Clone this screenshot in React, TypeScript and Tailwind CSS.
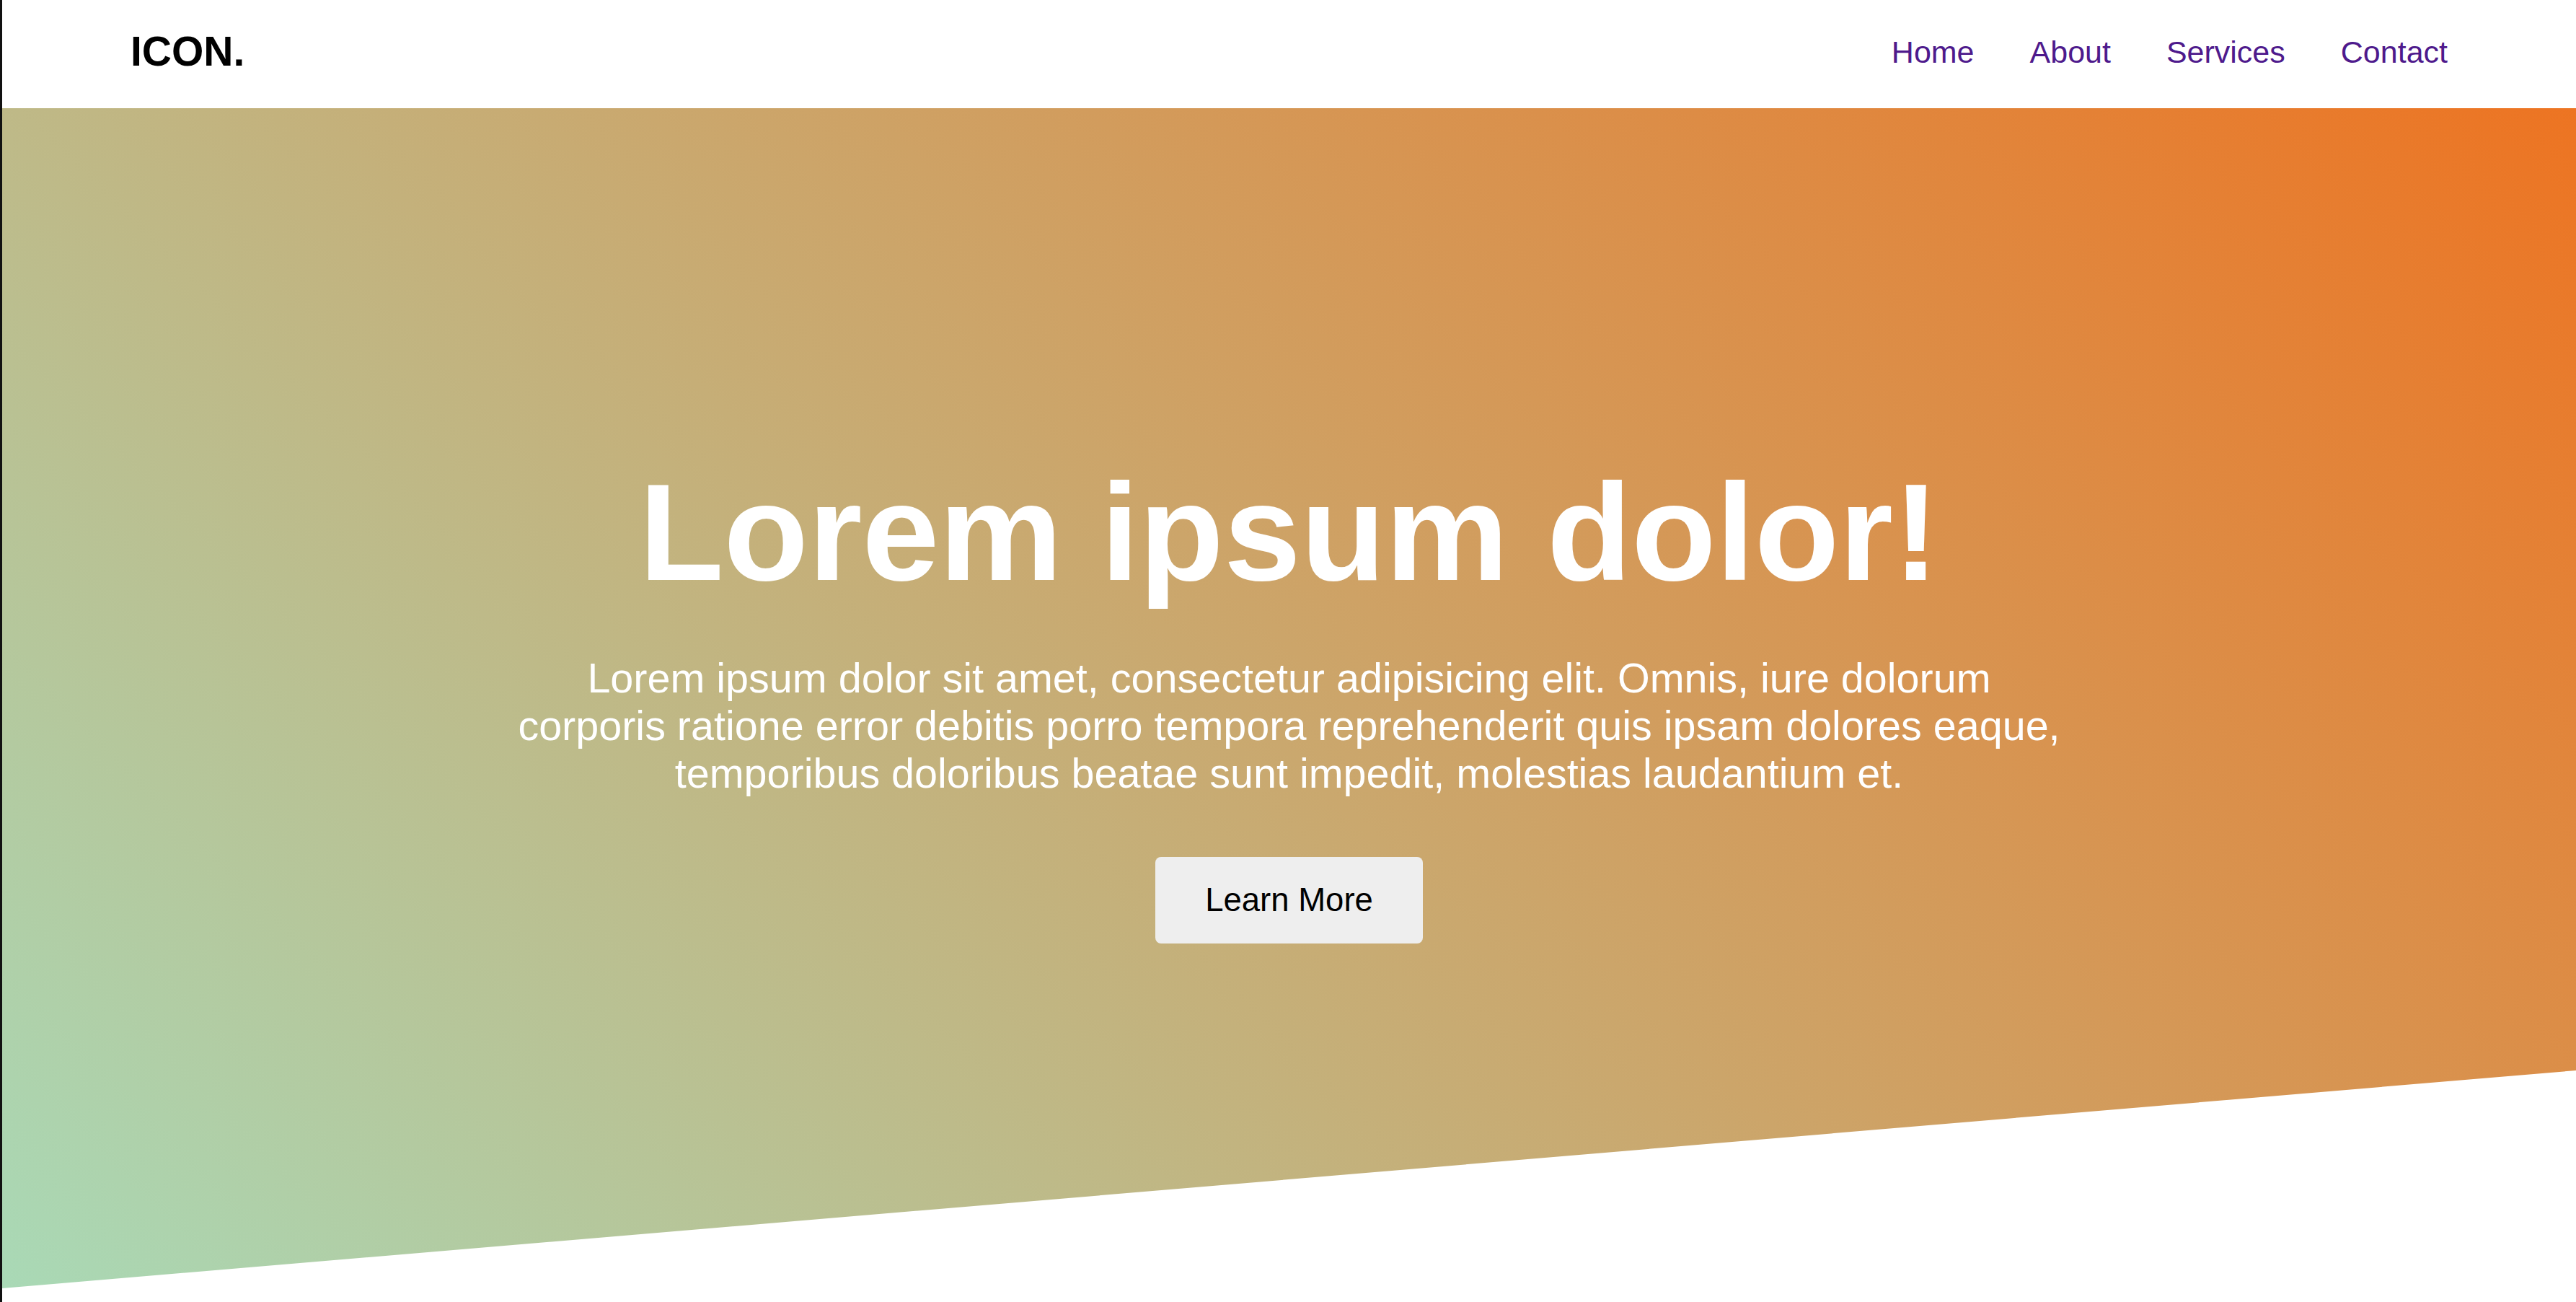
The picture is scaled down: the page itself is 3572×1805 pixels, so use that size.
const links = ["Home", "About", "Services", "Contact"];

export default function App() {
  return (
    <div className="min-h-screen border-l-[3px] border-[#111111] bg-white font-['Liberation_Sans',Arial,sans-serif]">
      <header className="flex h-[150px] items-center justify-between px-[178px] pb-[6px]">
        <div className="text-[57px] font-bold text-black">ICON.</div>
        <nav className="flex gap-[77px] text-[43px] text-[#4e1a8c]">
          {links.map((link) => (
            <a key={link} href="#">
              {link}
            </a>
          ))}
        </nav>
      </header>
      <section className="flex h-[1636px] flex-col items-center justify-center bg-[linear-gradient(45deg,#a9d9b6,#ed7422)] text-center text-white [clip-path:polygon(0_0,100%_0,100%_1334px,0_100%)]">
        <h1 className="text-[192px] font-bold leading-[1.149]">Lorem ipsum dolor!</h1>
        <p className="mt-[58px] w-[60%] text-[57.5px] leading-[1.149]">
          Lorem ipsum dolor sit amet, consectetur adipisicing elit. Omnis, iure dolorum corporis ratione error debitis
          porro tempora reprehenderit quis ipsam dolores eaque, temporibus doloribus beatae sunt impedit, molestias
          laudantium et.
        </p>
        <button className="mt-[83px] rounded-[8px] bg-[#eeeeee] px-[69px] py-[34px] text-[45.5px] leading-[1.149] text-black">
          Learn More
        </button>
      </section>
    </div>
  );
}
